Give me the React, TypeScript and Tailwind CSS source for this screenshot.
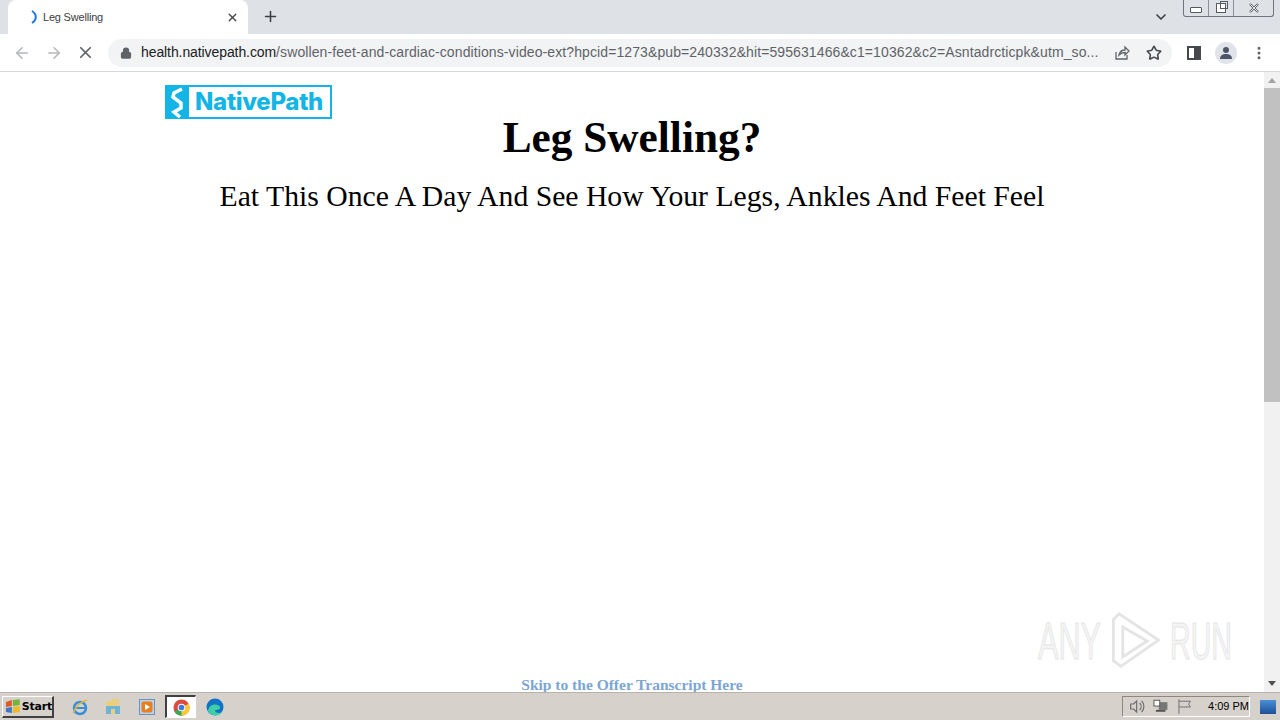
import { ArrowLeft, ArrowRight, ChevronDown, Lock, MoreVertical, Plus, Star, X } from 'lucide-react'

const Logo = () => (
	<div className="flex h-[34px] w-[167px] items-stretch border-2 border-[#12b5e5] bg-white">
		<div className="flex w-[22px] items-center justify-center bg-[#12b5e5]">
			<svg width="22" height="32" viewBox="0 0 22 32">
				<path d="M15 3 L7 7 L6 11 L14 17 L14 22 L7 26 L13 31" fill="none" stroke="#fff" strokeWidth="3.5" />
			</svg>
		</div>
		<span className="flex-1 pl-[6px] font-['Inter'] text-[24px] leading-[30px] font-extrabold tracking-[-0.3px] text-[#12b5e5]">
			NativePath
		</span>
	</div>
)

const TabBar = () => (
	<div className="relative flex h-[34px] items-end bg-[#dee1e6] pl-2">
		<div className="flex h-[34px] w-[240px] items-center rounded-t-lg bg-white pr-[8px] pl-[21px]">
			<svg width="12" height="14" viewBox="0 0 12 14">
				<path d="M3 1 C8 4 8 10 3 13" fill="none" stroke="#1a73e8" strokeWidth="2" />
			</svg>
			<span className="ml-[2px] flex-1 font-['Liberation_Sans'] text-[11px] tracking-[-0.2px] text-[#3c4043]">
				Leg Swelling
			</span>
			<X size={13} strokeWidth={2.5} className="mr-[1px] text-[#45484c]" />
		</div>
		<Plus size={17} strokeWidth={2.2} className="mb-[9px] ml-[14px] text-[#3c4043]" />
		<div className="flex-1" />
		<ChevronDown size={16} strokeWidth={2.5} className="mr-[111px] mb-[9px] text-[#3c4043]" />
		<div className="absolute top-0 right-[6px] flex h-[17px] w-[91px] rounded-b-[3px] border border-t-0 border-[#70757c] bg-[#dee1e6]">
			<div className="flex w-[25px] items-end justify-center border-r border-[#8b8f96] pb-[3px]">
				<div className="h-[6px] w-[12px] rounded-[1px] border border-[#555a60] bg-white" />
			</div>
			<div className="flex w-[25px] items-center justify-center border-r border-[#8b8f96]">
				<div className="relative h-[10px] w-[10px] border border-[#555a60] bg-white">
					<div className="absolute -top-[3px] -right-[3px] h-[8px] w-[8px] border border-[#555a60]" />
				</div>
			</div>
			<div className="relative flex flex-1 items-center justify-center">
				<X size={14} strokeWidth={3.5} className="text-[#555a60]" />
				<X size={14} strokeWidth={1.5} className="absolute text-white" />
			</div>
		</div>
	</div>
)

const Toolbar = () => (
	<div className="flex h-[38px] items-center border-b border-[#d5d7da] bg-white">
		<ArrowLeft size={18} strokeWidth={2} className="ml-[13px] text-[#b4b6b9]" />
		<ArrowRight size={18} strokeWidth={2} className="ml-[14px] text-[#b4b6b9]" />
		<X size={19} strokeWidth={2.2} className="ml-[13px] text-[#5f6368]" />
		<div className="ml-[13px] flex h-[28px] w-[1064px] items-center rounded-full bg-[#f1f3f4] pl-[12px]">
			<Lock size={12} strokeWidth={2.5} fill="#5f6368" className="shrink-0 text-[#5f6368]" />
			<div className="ml-[9px] w-[958px] shrink-0 overflow-hidden font-['Liberation_Sans'] text-[14px] tracking-[-0.09px] whitespace-nowrap">
				<span className="text-[#202124]">health.nativepath.com</span>
				<span className="tracking-[0.1px] text-[#5f6368]">
					/swollen-feet-and-cardiac-conditions-video-ext?hpcid=1273&amp;pub=240332&amp;hit=595631466&amp;c1=10362&amp;c2=Asntadrcticpk&amp;utm_so...
				</span>
			</div>
			<svg width="16" height="16" viewBox="0 0 16 16" className="ml-[15px] shrink-0" fill="none" stroke="#5f6368" strokeWidth="1.3">
				<path d="M2 7 V14 H13 V10 M5 10 C6 6 9 5 11 5 V2 L15 6 L11 10 V7.5 C9 7.5 7 8 5 10 Z" />
			</svg>
			<Star size={16} strokeWidth={2.4} className="ml-[16px] shrink-0 text-[#45484c]" />
		</div>
		<div className="ml-[15px] flex h-[14px] w-[14px] justify-end border-2 border-[#45484c]">
			<div className="h-full w-[5px] bg-[#45484c]" />
		</div>
		<div className="ml-[14px] flex h-[22px] w-[22px] items-center justify-center rounded-full bg-[#e0e3e8]">
			<svg width="14" height="14" viewBox="0 0 14 14" fill="#4d5568">
				<circle cx="7" cy="4" r="3" />
				<path d="M1 13 C1 9 4 8 7 8 C10 8 13 9 13 13 Z" />
			</svg>
		</div>
		<MoreVertical size={16} strokeWidth={2.5} className="ml-[14px] text-[#5f6368]" />
	</div>
)

const Scrollbar = () => (
	<div className="flex w-4 flex-col items-center bg-[#f1f1f1]">
		<div className="mt-[6px] h-0 w-0 border-x-[4px] border-b-[5px] border-x-transparent border-b-[#a3a3a3]" />
		<div className="mt-[5px] h-[314px] w-full bg-[#c1c1c1]" />
		<div className="flex-1" />
		<div className="mb-[6px] h-0 w-0 border-x-[4px] border-t-[5px] border-x-transparent border-t-[#505050]" />
	</div>
)

const Watermark = () => (
	<div className="absolute top-[537px] left-[1038px] flex w-[194px] items-center font-['Liberation_Sans'] text-[52px] leading-[64px] text-[#f4f4f4] [-webkit-text-stroke:1px_#e4e4e4]">
		<span className="inline-block w-[62px] origin-left scale-x-[0.59]">ANY</span>
		<svg width="62" height="62" viewBox="0 0 62 66" fill="none" stroke="#e4e4e4" strokeWidth="3" className="mx-[4px] shrink-0">
			<path d="M8 10 L14 4 L56 32 L16 60 L8 54 Z" />
			<path d="M18 18 L44 33 L18 50 Z" />
		</svg>
		<span className="inline-block w-[62px] origin-left scale-x-[0.55]">RUN</span>
	</div>
)

const Taskbar = () => (
	<div className="flex h-[28px] items-center border-t border-[#b8b4ac] bg-[#d6d2cb]">
		<div className="ml-[2px] flex h-[22px] w-[52px] items-center border border-r-2 border-b-2 border-white border-r-[#404040] border-b-[#404040] pl-[2px]">
			<svg width="16" height="15" viewBox="0 0 16 15">
				<path d="M1 3 L7 1 V7 L1 8 Z" fill="#e2582a" />
				<path d="M8 1 L15 0 V6 L8 7 Z" fill="#74b43c" />
				<path d="M1 9 L7 8 V14 L1 13 Z" fill="#3b78c9" />
				<path d="M8 8 L15 7 V13 L8 14 Z" fill="#efbb2c" />
			</svg>
			<span className="ml-[1px] pt-[2px] font-['DejaVu_Sans'] text-[11px] font-bold tracking-[-0.2px] text-black">Start</span>
		</div>
		<svg width="18" height="18" viewBox="0 0 18 18" fill="none" className="ml-[17px]">
			<circle cx="9" cy="10" r="6" stroke="#3a8fd9" strokeWidth="2.5" />
			<path d="M4 10 H14" stroke="#3a8fd9" strokeWidth="2" />
			<path d="M2 15 C5 8 11 3 16 2" stroke="#e7b93c" strokeWidth="1.5" />
		</svg>
		<svg width="16" height="18" viewBox="0 0 16 18" className="ml-[16px]">
			<path d="M1 3 H6 L7 1 H14 V16 H1 Z" fill="#e9cf7e" />
			<path d="M1 8 H15 V16 H10 V11 H6 V16 H1 Z" fill="#6fb4d6" />
		</svg>
		<svg width="16" height="16" viewBox="0 0 16 16" className="ml-[18px]">
			<rect x="0.5" y="0.5" width="15" height="15" fill="#bcd2ea" stroke="#6c93c0" />
			<rect x="2.5" y="2.5" width="11" height="11" rx="2" fill="#e57f1f" />
			<path d="M6 5 L11 8 L6 11 Z" fill="#fff" />
		</svg>
		<div className="ml-[10px] flex h-[23px] w-[31px] items-center justify-center border border-t-2 border-l-2 border-[#404040] border-r-white border-b-white bg-white">
			<svg width="17" height="17" viewBox="0 0 18 18">
				<circle cx="9" cy="9" r="8.5" fill="#dd4b3e" />
				<path d="M9 9 L1.5 13.3 A8.5 8.5 0 0 0 11 17.3 Z" fill="#3aa757" />
				<path d="M9 9 L16.6 5 A8.5 8.5 0 0 1 9 17.5 Z" fill="#fcc934" />
				<circle cx="9" cy="9" r="4" fill="#fff" />
				<circle cx="9" cy="9" r="3" fill="#3b78e7" />
			</svg>
		</div>
		<svg width="18" height="18" viewBox="0 0 18 18" className="ml-[10px]">
			<circle cx="9" cy="9" r="8.5" fill="#1173c6" />
			<path d="M2 12 C4 6 11 5 14 9 C15 11 12 12 9 12 C9 15 13 16 16 14 C14 17.5 10 18 7 17 C4 16 2 14 2 12 Z" fill="#3fd0a8" />
		</svg>
		<div className="flex-1" />
		<div className="mr-[30px] flex h-[21px] w-[128px] items-center border border-r-white border-b-white border-[#8c8880] pl-[6px]">
			<svg width="18" height="15" viewBox="0 0 16 15" fill="none" stroke="#6f6f6f" strokeWidth="1.2">
				<path d="M1 5 H4 L7 2 V13 L4 10 H1 Z M10 4 C12 6 12 9 10 11 M12 2 C15 5 15 10 12 13" />
			</svg>
			<svg width="16" height="15" viewBox="0 0 16 15" className="ml-[7px]">
				<rect x="6" y="3" width="9" height="8" fill="#777" />
				<rect x="1" y="1" width="6" height="6" fill="#fff" stroke="#555" />
				<path d="M3 12 H13" stroke="#555" strokeWidth="2" />
			</svg>
			<svg width="16" height="15" viewBox="0 0 16 15" fill="none" stroke="#6f6f6f" className="ml-[8px]">
				<path d="M2 0 V15 M2 2 H14 L12 5 L14 8 H2" />
			</svg>
			<span className="ml-[16px] font-['Liberation_Sans'] text-[11px] whitespace-nowrap text-black">4:09 PM</span>
		</div>
		<div className="absolute right-[4px] h-[14px] w-[16px] bg-gradient-to-b from-[#4a90d8] to-[#1d4f96]" />
	</div>
)

export default function App() {
	return (
		<div className="relative flex h-[720px] w-[1280px] flex-col overflow-hidden bg-white">
			<TabBar />
			<Toolbar />
			<div className="flex h-[620px] bg-white">
				<main className="relative flex-1 overflow-hidden font-['Liberation_Serif'] text-black">
					<div className="pt-[13px] pl-[165px]">
						<Logo />
					</div>
					<h1 className="-mt-[8px] text-center text-[43.3px] leading-[52px] font-bold">Leg Swelling?</h1>
					<h2 className="mt-[14px] text-center text-[29.7px] leading-[38px]">
						Eat This Once A Day And See How Your Legs, Ankles And Feet Feel
					</h2>
					<p className="mt-[460px] text-center text-[15.5px] leading-[20px] font-bold text-[#7ba6d3]">
						Skip to the Offer Transcript Here
					</p>
					<Watermark />
				</main>
				<Scrollbar />
			</div>
			<Taskbar />
		</div>
	)
}
